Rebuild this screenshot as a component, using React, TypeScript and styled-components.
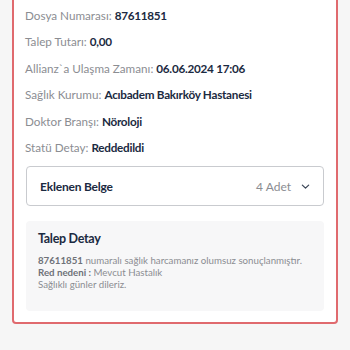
import React from "react";
import styled, { createGlobalStyle } from "styled-components";

const Global = createGlobalStyle`
  html, body { margin: 0; padding: 0; background: #f6f6f6; }
  body { font-family: Lato, "Noto Sans", sans-serif; overflow: hidden; }
`;

const Page = styled.div`
  padding: 0 12px;
  height: 350px;
  box-sizing: border-box;
`;

const Card = styled.div`
  margin-top: -11px;
  background: #ffffff;
  border: 2px solid #e06a6e;
  border-radius: 4px;
  padding: 11px 12px 11px 11px;
  display: flex;
  flex-direction: column;
`;

const Row = styled.div`
  font-size: 11.7px;
  line-height: 26.4px;
  color: #8b8d92;
  white-space: nowrap;
`;

const Value = styled.span`
  color: #1b2a41;
  font-weight: 700;
  letter-spacing: -0.25px;
`;

const Accordion = styled.div`
  margin-top: 6px;
  margin-left: 1px;
  height: 40px;
  box-sizing: border-box;
  border: 1px solid #c9cbcf;
  border-radius: 4px;
  display: flex;
  align-items: center;
  padding: 0 13px 0 13px;
`;

const AccTitle = styled.div`
  flex: 1;
  font-size: 12px;
  font-weight: 700;
  color: #1b2a41;
  letter-spacing: -0.2px;
`;

const AccCount = styled.div`
  font-size: 12px;
  color: #8b8d92;
  margin-right: 10px;
`;

const Detail = styled.div`
  margin-top: 15px;
  margin-left: 1px;
  background: #f7f7f8;
  border-radius: 4px;
  padding: 10px 12px 20px 12px;
  height: 90px;
  box-sizing: border-box;
`;

const DetailTitle = styled.div`
  font-size: 12.5px;
  font-weight: 700;
  color: #1b2a41;
  line-height: 16px;
  margin-bottom: 7px;
  letter-spacing: -0.3px;
`;

const DetailText = styled.div`
  font-size: 9.7px;
  line-height: 12px;
  color: #8b8d92;
`;

const Strong = styled.span`
  font-weight: 700;
  color: #6f7278;
`;

const rows: [string, string][] = [
  ["Dosya Numarası:", "87611851"],
  ["Talep Tutarı:", "0,00"],
  ["Allianz`a Ulaşma Zamanı:", "06.06.2024 17:06"],
  ["Sağlık Kurumu:", "Acıbadem Bakırköy Hastanesi"],
  ["Doktor Branşı:", "Nöroloji"],
  ["Statü Detay:", "Reddedildi"],
];

export default function App() {
  return (
    <Page>
      <Global />
      <Card>
        {rows.map(([l, v]) => (
          <Row key={l}>
            {l} <Value>{v}</Value>
          </Row>
        ))}
        <Accordion>
          <AccTitle>Eklenen Belge</AccTitle>
          <AccCount>4 Adet</AccCount>
          <svg width="9" height="9" viewBox="0 0 10 10" fill="none">
            <path d="M1.5 3.5 L5 6.8 L8.5 3.5" stroke="#3a4556" strokeWidth="1.4" strokeLinecap="round" strokeLinejoin="round" />
          </svg>
        </Accordion>
        <Detail>
          <DetailTitle>Talep Detay</DetailTitle>
          <DetailText>
            <Strong>87611851</Strong> numaralı sağlık harcamanız olumsuz sonuçlanmıştır.
            <br />
            <Strong>Red nedeni :</Strong> Mevcut Hastalık
            <br />
            Sağlıklı günler dileriz.
          </DetailText>
        </Detail>
      </Card>
    </Page>
  );
}
